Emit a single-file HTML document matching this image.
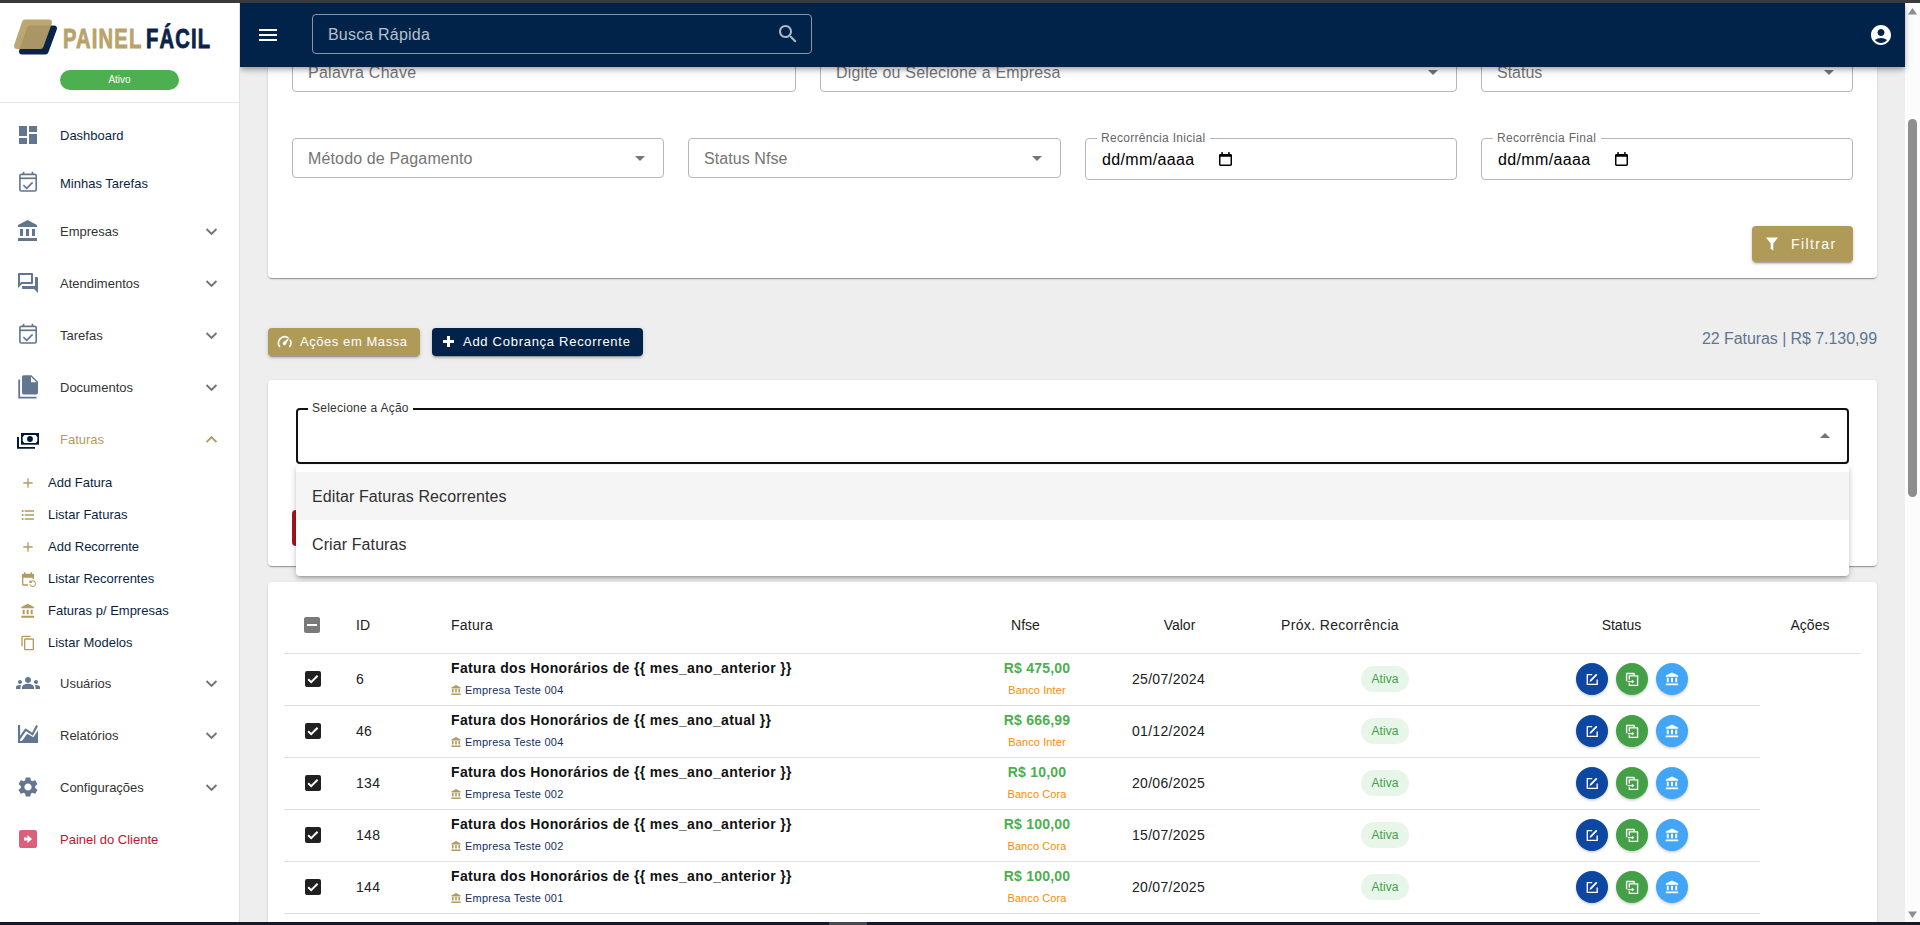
<!DOCTYPE html>
<html><head><meta charset="utf-8">
<style>
*{box-sizing:border-box;margin:0;padding:0}
html,body{width:1920px;height:925px;overflow:hidden;background:#eeeeee;font-family:"Liberation Sans",sans-serif;color:#212121}
.a{position:absolute}
#topstrip{left:0;top:0;width:1920px;height:3px;background:#3a3a3a;z-index:20}
#botstrip{left:0;top:922px;width:1920px;height:3px;background:#131a2d;z-index:20}
#sidebar{left:0;top:3px;width:240px;height:919px;background:#fff;border-right:1px solid #e0e0e0}
#topbar{left:240px;top:3px;width:1665px;height:64px;background:#012349;box-shadow:0 2px 4px -1px rgba(0,0,0,.2),0 4px 5px 0 rgba(0,0,0,.14),0 1px 10px 0 rgba(0,0,0,.12);z-index:10;clip-path:inset(0 -30px -30px 0)}
#scroll{left:1905px;top:3px;width:15px;height:919px;background:#fcfcfc}
.card{background:#fff;border-radius:4px;box-shadow:0 2px 1px -1px rgba(0,0,0,.2),0 1px 1px 0 rgba(0,0,0,.14),0 1px 3px 0 rgba(0,0,0,.12)}
.nav{left:0;width:239px;height:20px;line-height:20px;font-size:13px}
.nav .t{position:absolute;left:60px;top:0}
.nav svg{position:absolute}
.sub .t{left:48px}
.chev{position:absolute;left:203.5px;top:1.8px}
.inp{border:1px solid #b7b7b7;border-radius:4px;background:#fff}
.ph{position:absolute;font-size:16px;color:#757575;line-height:20px;white-space:nowrap}
.lbl{position:absolute;font-size:12px;color:#666;background:#fff;padding:0 4px;line-height:14px;white-space:nowrap}
.btn{border-radius:4px;color:#fff;box-shadow:0 3px 1px -2px rgba(0,0,0,.2),0 2px 2px 0 rgba(0,0,0,.14),0 1px 5px 0 rgba(0,0,0,.12)}
.th{position:absolute;font-size:14px;color:#212121;line-height:20px;white-space:nowrap}
.td{position:absolute;white-space:nowrap;line-height:16px}
</style></head><body>
<div id="topstrip" class="a"></div>

<!-- SIDEBAR -->
<div id="sidebar" class="a"></div>
<svg class="a" style="left:0;top:0" width="70" height="70" viewBox="0 0 70 70">
<polygon points="30,28.5 54,28.5 45.5,51.5 22,51.5" fill="#0b2349" stroke="#0b2349" stroke-width="6" stroke-linejoin="round"/>
<polygon points="25,22.5 49,22.5 40.5,46 17,46" fill="#b7a067" stroke="#b7a067" stroke-width="6" stroke-linejoin="round" opacity="0.92"/>
</svg>
<div class="a" style="left:63px;top:23px;height:32px;line-height:32px;font-size:28px;font-weight:bold;white-space:nowrap;transform:scaleX(0.72);transform-origin:0 0;color:#b9a36a;-webkit-text-stroke:0.9px #b9a36a;letter-spacing:1.6px">PAINEL</div>
<div class="a" style="left:146px;top:23px;height:32px;line-height:32px;font-size:28px;font-weight:bold;white-space:nowrap;transform:scaleX(0.72);transform-origin:0 0;color:#0b2349;-webkit-text-stroke:0.9px #0b2349;letter-spacing:1.6px">FÁCIL</div>
<div class="a" style="left:60px;top:70px;width:119px;height:20px;border-radius:10px;background:#4caf50;color:#fff;font-size:10px;line-height:20px;text-align:center">Ativo</div>
<div class="a" style="left:0;top:102px;width:239px;height:1px;background:#e6e6e6"></div>
<div class="a nav" style="top:126px;color:#0b1f3f"><svg style="left:16px;top:-3px" width="24" height="24" viewBox="0 0 24 24" fill="#62778f"><path d="M3 13h8V3H3v10zm0 8h8v-6H3v6zm10 0h8V11h-8v10zm0-18v6h8V3h-8z"/></svg><span class="t">Dashboard</span></div>
<div class="a nav" style="top:174px;color:#0b1f3f"><svg style="left:16px;top:-3px" width="24" height="24" viewBox="16 -3 24 24"><rect x="19.9" y="0.4" width="16.3" height="16.6" rx="1.4" fill="none" stroke="#62778f" stroke-width="1.6"/><path d="M19.9 4.3H36.2" stroke="#62778f" stroke-width="1.7"/><path d="M22.7 -2.2h1.7v3h-1.7zM31.6 -2.2h1.7v3h-1.7z" fill="#62778f"/><path d="M23.4 11.2L26.7 14.3 32.6 8.4" fill="none" stroke="#62778f" stroke-width="1.6"/></svg><span class="t">Minhas Tarefas</span></div>
<div class="a nav" style="top:222px;color:#333"><svg style="left:16px;top:-3px" width="24" height="24" viewBox="0 0 24 24" fill="#62778f"><path d="M4 10v7h3v-7H4zm6 0v7h3v-7h-3zM2 22h19v-3H2v3zm14-12v7h3v-7h-3zm-4.5-9L2 6v2h19V6l-9.5-5z"/></svg><span class="t">Empresas</span><svg class="chev" width="15" height="15" viewBox="4 4 16 16"><path fill="#757575" d="M16.59 8.59L12 13.17 7.41 8.59 6 10l6 6 6-6z"/></svg></div>
<div class="a nav" style="top:274px;color:#333"><svg style="left:16px;top:-3px" width="24" height="24" viewBox="0 0 24 24" fill="#62778f"><path d="M15 4v7H5.17L4 12.17V4h11m1-2H3c-.55 0-1 .45-1 1v14l4-4h10c.55 0 1-.45 1-1V3c0-.55-.45-1-1-1zm5 4h-2v9H6v2c0 .55.45 1 1 1h11l4 4V7c0-.55-.45-1-1-1z"/></svg><span class="t">Atendimentos</span><svg class="chev" width="15" height="15" viewBox="4 4 16 16"><path fill="#757575" d="M16.59 8.59L12 13.17 7.41 8.59 6 10l6 6 6-6z"/></svg></div>
<div class="a nav" style="top:326px;color:#333"><svg style="left:16px;top:-3px" width="24" height="24" viewBox="16 -3 24 24"><rect x="19.9" y="0.4" width="16.3" height="16.6" rx="1.4" fill="none" stroke="#62778f" stroke-width="1.6"/><path d="M19.9 4.3H36.2" stroke="#62778f" stroke-width="1.7"/><path d="M22.7 -2.2h1.7v3h-1.7zM31.6 -2.2h1.7v3h-1.7z" fill="#62778f"/><path d="M23.4 11.2L26.7 14.3 32.6 8.4" fill="none" stroke="#62778f" stroke-width="1.6"/></svg><span class="t">Tarefas</span><svg class="chev" width="15" height="15" viewBox="4 4 16 16"><path fill="#757575" d="M16.59 8.59L12 13.17 7.41 8.59 6 10l6 6 6-6z"/></svg></div>
<div class="a nav" style="top:378px;color:#333"><svg style="left:16px;top:-3px" width="24" height="24" viewBox="16 375 24 24"><path fill="#62778f" fill-rule="evenodd" d="M22 377Q22 375.3 23.7 375.3H31.5L38 381.8V392.8Q38 394.5 36.3 394.5H23.7Q22 394.5 22 392.8ZM31 376.8V382.2H36.5Z"/><path fill="#62778f" d="M18.3 379.4H20.1V396.8H36.5V398.6H18.3Z"/></svg><span class="t">Documentos</span><svg class="chev" width="15" height="15" viewBox="4 4 16 16"><path fill="#757575" d="M16.59 8.59L12 13.17 7.41 8.59 6 10l6 6 6-6z"/></svg></div>
<div class="a nav" style="top:430px;color:#b39b5f"><svg style="left:16px;top:0px" width="24" height="24" viewBox="16 430 24 24"><path fill="#03183a" d="M21 433H39V444.7H21z"/><path fill="#fff" d="M24.2 435.1H35.8L37.3 437.3V440.9L35.8 443H24.2L22.7 440.9V437.3z"/><circle cx="30" cy="439" r="2.9" fill="#03183a"/><path fill="#03183a" d="M17 437H19V446.9H35V448.7H17z"/></svg><span class="t">Faturas</span><svg class="chev" width="15" height="15" viewBox="4 4 16 16"><path fill="#b39b5f" d="M12 8l-6 6 1.41 1.41L12 10.83l4.59 4.58L18 14z"/></svg></div>
<div class="a nav sub" style="top:473px;color:#0b1f3f"><svg style="left:20px;top:2px" width="16" height="16" viewBox="0 0 24 24" fill="#b39b5f"><path d="M19 13h-6v6h-2v-6H5v-2h6V5h2v6h6v2z"/></svg><span class="t">Add Fatura</span></div>
<div class="a nav sub" style="top:505px;color:#0b1f3f"><svg style="left:20px;top:2px" width="16" height="16" viewBox="0 0 24 24" fill="#b39b5f"><path d="M4 10.5c-.83 0-1.5.67-1.5 1.5s.67 1.5 1.5 1.5 1.5-.67 1.5-1.5-.67-1.5-1.5-1.5zm0-6c-.83 0-1.5.67-1.5 1.5S3.170 7.5 4 7.5 5.5 6.830 5.5 6 4.830 4.5 4 4.5zm0 12c-.83 0-1.5.68-1.5 1.5s.68 1.5 1.5 1.5 1.5-.68 1.5-1.5-.67-1.5-1.5-1.5zM7 19h14v-2H7v2zm0-6h14v-2H7v2zm0-8v2h14V5H7z"/></svg><span class="t">Listar Faturas</span></div>
<div class="a nav sub" style="top:537px;color:#0b1f3f"><svg style="left:20px;top:2px" width="16" height="16" viewBox="0 0 24 24" fill="#b39b5f"><path d="M19 13h-6v6h-2v-6H5v-2h6V5h2v6h6v2z"/></svg><span class="t">Add Recorrente</span></div>
<div class="a nav sub" style="top:569px;color:#0b1f3f"><svg style="left:20px;top:1.5px" width="16" height="16" viewBox="0 0 24 24" fill="#b39b5f"><path d="M21 12V6c0-1.1-.9-2-2-2h-1V2h-2v2H8V2H6v2H5c-1.1 0-2 .9-2 2v14c0 1.1.9 2 2 2h7v-2H5V10h14v2h2zm-5.36 8c.43 1.45 1.77 2.5 3.36 2.5 1.93 0 3.5-1.57 3.5-3.5s-1.57-3.5-3.5-3.5c-.95 0-1.820.38-2.45 1H18V18h-4v-4h1.5v1.43C16.4 14.55 17.64 14 19 14c2.76 0 5 2.24 5 5s-2.24 5-5 5c-2.42 0-4.44-1.72-4.9-4h1.54z"/></svg><span class="t">Listar Recorrentes</span></div>
<div class="a nav sub" style="top:601px;color:#0b1f3f"><svg style="left:20px;top:2px" width="16" height="16" viewBox="0 0 24 24" fill="#b39b5f"><path d="M4 10v7h3v-7H4zm6 0v7h3v-7h-3zM2 22h19v-3H2v3zm14-12v7h3v-7h-3zm-4.5-9L2 6v2h19V6l-9.5-5z"/></svg><span class="t">Faturas p/ Empresas</span></div>
<div class="a nav sub" style="top:633px;color:#0b1f3f"><svg style="left:20px;top:2px" width="16" height="16" viewBox="0 0 24 24" fill="#b39b5f"><path d="M16 1H4c-1.1 0-2 .9-2 2v14h2V3h12V1zm3 4H8c-1.1 0-2 .9-2 2v14c0 1.1.9 2 2 2h11c1.1 0 2-.9 2-2V7c0-1.1-.9-2-2-2zm0 16H8V7h11v14z"/></svg><span class="t">Listar Modelos</span></div>
<div class="a nav" style="top:674px;color:#333"><svg style="left:16px;top:-3px" width="24" height="24" viewBox="0 0 24 24" fill="#62778f"><path d="M12 12.75c1.63 0 3.07.39 4.24.9 1.08.48 1.76 1.56 1.76 2.73V18H6v-1.61c0-1.18.68-2.26 1.76-2.73 1.17-.52 2.61-.91 4.24-.91zM4 13c1.1 0 2-.9 2-2s-.9-2-2-2-2 .9-2 2 .9 2 2 2zm1.13 1.1c-.37-.06-.74-.1-1.13-.1-.99 0-1.930.21-2.78.58C.48 14.9 0 15.62 0 16.43V18h4.5v-1.61c0-.83.23-1.61.63-2.29zM20 13c1.1 0 2-.9 2-2s-.9-2-2-2-2 .9-2 2 .9 2 2 2zm4 3.43c0-.81-.48-1.53-1.22-1.85-.85-.37-1.79-.58-2.780-.58-.39 0-.76.04-1.13.1.4.68.63 1.46.63 2.29V18H24v-1.57zM12 6c1.66 0 3 1.34 3 3s-1.34 3-3 3-3-1.34-3-3 1.34-3 3-3z"/></svg><span class="t">Usuários</span><svg class="chev" width="15" height="15" viewBox="4 4 16 16"><path fill="#757575" d="M16.59 8.59L12 13.17 7.41 8.59 6 10l6 6 6-6z"/></svg></div>
<div class="a nav" style="top:726px;color:#333"><svg style="left:16px;top:-4px" width="24" height="24" viewBox="0 0 24 24" fill="#62778f"><path d="M2 3h2.1v16h17.9v2H2z"/><path d="M3.2 16.8L9.7 7.6 16.5 12.2 21.1 3.6" fill="none" stroke="#62778f" stroke-width="2.1"/><path d="M5.2 20L11.2 11.8 17.4 15.3 22 8.2V20z"/></svg><span class="t">Relatórios</span><svg class="chev" width="15" height="15" viewBox="4 4 16 16"><path fill="#757575" d="M16.59 8.59L12 13.17 7.41 8.59 6 10l6 6 6-6z"/></svg></div>
<div class="a nav" style="top:778px;color:#333"><svg style="left:16px;top:-3px" width="24" height="24" viewBox="0 0 24 24" fill="#62778f"><path d="M19.14 12.94c.04-.3.06-.61.06-.94 0-.32-.02-.64-.07-.94l2.03-1.58c.18-.14.23-.41.12-.61l-1.92-3.32c-.12-.22-.37-.29-.59-.22l-2.39.96c-.5-.38-1.03-.7-1.62-.94l-.36-2.54c-.04-.24-.24-.41-.48-.41h-3.84c-.24 0-.43.17-.47.41l-.36 2.54c-.59.24-1.13.57-1.62.94l-2.39-.96c-.22-.08-.47 0-.59.22L2.74 8.87c-.12.21-.08.47.12.61l2.03 1.58c-.05.3-.09.63-.09.94s.02.64.07.94l-2.03 1.58c-.18.14-.23.41-.12.61l1.92 3.32c.12.22.37.29.59.22l2.39-.96c.5.38 1.03.7 1.62.94l.36 2.54c.05.24.24.41.48.41h3.84c.24 0 .44-.17.47-.41l.36-2.54c.59-.24 1.13-.56 1.62-.94l2.39.96c.22.08.47 0 .59-.22l1.92-3.32c.12-.22.07-.47-.12-.61l-2.01-1.58zM12 15.6c-1.98 0-3.6-1.62-3.6-3.6s1.62-3.6 3.6-3.6 3.6 1.62 3.6 3.6-1.62 3.6-3.6 3.6z"/></svg><span class="t">Configurações</span><svg class="chev" width="15" height="15" viewBox="4 4 16 16"><path fill="#757575" d="M16.59 8.59L12 13.17 7.41 8.59 6 10l6 6 6-6z"/></svg></div>
<div class="a nav" style="top:830px;color:#c8102e"><div class="a" style="left:19px;top:0px;width:18px;height:18px;border-radius:2px;background:#d9627a"></div><svg class="a" style="left:22px;top:3px" width="12" height="12" viewBox="0 0 12 12"><path fill="#fff" d="M2 4.5h3.5V2L10 6 5.5 10V7.5H2z"/></svg><span class="t">Painel do Cliente</span></div>

<!-- TOPBAR -->
<div id="topbar" class="a">
<svg class="a" style="left:16px;top:20px" width="24" height="24" viewBox="0 0 24 24" fill="#fff"><path d="M3 18h18v-2H3v2zm0-5h18v-2H3v2zm0-7v2h18V6H3z"/></svg>
<div class="a" style="left:72px;top:11px;width:500px;height:40px;border:1px solid #8796ab;border-radius:4px"></div>
<div class="a" style="left:88px;top:22px;font-size:16px;line-height:20px;color:#b7c0cc;letter-spacing:0.2px;white-space:nowrap">Busca Rápida</div>
<svg class="a" style="left:536px;top:19px" width="24" height="24" viewBox="0 0 24 24" fill="#adb9c9"><path d="M15.5 14h-.79l-.28-.27C15.41 12.59 16 11.11 16 9.5 16 5.91 13.09 3 9.5 3S3 5.91 3 9.5 5.91 16 9.5 16c1.61 0 3.09-.59 4.23-1.57l.27.28v.79l5 4.99L20.49 19l-4.99-5zm-6 0C7.01 14 5 11.99 5 9.5S7.01 5 9.5 5 14 7.01 14 9.5 11.99 14 9.5 14z"/></svg>
<svg class="a" style="left:1629px;top:20px" width="24" height="24" viewBox="0 0 24 24" fill="#fff"><path d="M12 2C6.48 2 2 6.48 2 12s4.48 10 10 10 10-4.48 10-10S17.52 2 12 2zm0 4c1.93 0 3.5 1.57 3.5 3.5S13.93 13 12 13s-3.5-1.57-3.5-3.5S10.07 6 12 6zm0 14c-2.03 0-4.43-.82-6.14-2.88C7.55 15.8 9.68 15 12 15s4.45.8 6.14 2.12C16.43 19.18 14.03 20 12 20z"/></svg>
</div>

<!-- MAIN -->

<!-- filter card -->
<div class="a card" style="left:268px;top:-20px;width:1609px;height:298px"></div>
<div class="a inp" style="left:292px;top:52px;width:504px;height:40px"></div>
<div class="ph" style="left:308px;top:63px;letter-spacing:0.27px">Palavra Chave</div>
<div class="a inp" style="left:820px;top:52px;width:637px;height:40px"></div>
<div class="ph" style="left:836px;top:63px;letter-spacing:0.17px">Digite ou Selecione a Empresa</div>
<svg class="a" style="left:1428px;top:70px" width="10" height="5" viewBox="0 0 10 5"><path d="M0 0h10L5 5z" fill="#757575"/></svg>
<div class="a inp" style="left:1481px;top:52px;width:372px;height:40px"></div>
<div class="ph" style="left:1497px;top:63px;letter-spacing:0px">Status</div>
<svg class="a" style="left:1824px;top:70px" width="10" height="5" viewBox="0 0 10 5"><path d="M0 0h10L5 5z" fill="#757575"/></svg>

<div class="a inp" style="left:292px;top:138px;width:372px;height:40px"></div>
<div class="ph" style="left:308px;top:149px;letter-spacing:0.14px">Método de Pagamento</div>
<svg class="a" style="left:635px;top:156px" width="10" height="5" viewBox="0 0 10 5"><path d="M0 0h10L5 5z" fill="#757575"/></svg>
<div class="a inp" style="left:688px;top:138px;width:373px;height:40px"></div>
<div class="ph" style="left:704px;top:149px;letter-spacing:0.08px">Status Nfse</div>
<svg class="a" style="left:1032px;top:156px" width="10" height="5" viewBox="0 0 10 5"><path d="M0 0h10L5 5z" fill="#757575"/></svg>

<div class="a inp" style="left:1085px;top:138px;width:372px;height:42px"></div>
<div class="lbl" style="left:1097px;top:131px;letter-spacing:0.3px;padding-right:5px">Recorrência Inicial</div>
<div class="ph" style="left:1102px;top:150px;color:#000;letter-spacing:0.35px">dd/mm/aaaa</div>
<svg class="a" style="left:1219px;top:152px" width="13" height="14" viewBox="0 0 14 15"><path fill="#000" d="M1.5 2h11a1.5 1.5 0 0 1 1.5 1.5v10a1.5 1.5 0 0 1-1.5 1.5h-11A1.5 1.5 0 0 1 0 13.5v-10A1.5 1.5 0 0 1 1.5 2zM1.6 5.2v8.2h10.8V5.2z"/><rect x="2.5" y="0" width="1.6" height="3" fill="#000"/><rect x="9.9" y="0" width="1.6" height="3" fill="#000"/></svg>
<div class="a inp" style="left:1481px;top:138px;width:372px;height:42px"></div>
<div class="lbl" style="left:1493px;top:131px;letter-spacing:0.3px;padding-right:5px">Recorrência Final</div>
<div class="ph" style="left:1498px;top:150px;color:#000;letter-spacing:0.35px">dd/mm/aaaa</div>
<svg class="a" style="left:1615px;top:152px" width="13" height="14" viewBox="0 0 14 15"><path fill="#000" d="M1.5 2h11a1.5 1.5 0 0 1 1.5 1.5v10a1.5 1.5 0 0 1-1.5 1.5h-11A1.5 1.5 0 0 1 0 13.5v-10A1.5 1.5 0 0 1 1.5 2zM1.6 5.2v8.2h10.8V5.2z"/><rect x="2.5" y="0" width="1.6" height="3" fill="#000"/><rect x="9.9" y="0" width="1.6" height="3" fill="#000"/></svg>

<div class="a btn" style="left:1752px;top:226px;width:101px;height:36px;background:#b09a58"></div>
<svg class="a" style="left:1764px;top:236px" width="16" height="16" viewBox="0 0 16 16"><path fill="#fff" d="M2 1.5h12L9.3 7.6V14.5L6.7 13V7.6z"/></svg>
<div class="a" style="left:1791px;top:235px;font-size:14px;line-height:18px;color:#fff;letter-spacing:1.4px">Filtrar</div>

<!-- mass action buttons -->
<div class="a btn" style="left:268px;top:328px;width:152px;height:28px;background:#b09a58"></div>
<svg class="a" style="left:276px;top:334px" width="18" height="16" viewBox="276 334 18 16"><path d="M279.6 346.5A6.2 6.2 0 0 1 287.6 337.5M290.2 340.1A6.2 6.2 0 0 1 289.8 346.5" fill="none" stroke="#fff" stroke-width="1.6" stroke-linecap="round"/><path d="M283 342.6L289.6 337.2 285.8 344.5A1.6 1.6 0 0 1 283 342.6Z" fill="#fff"/></svg>
<div class="a" style="left:300px;top:333px;font-size:13px;line-height:18px;color:#fff;letter-spacing:0.56px;white-space:nowrap">Ações em Massa</div>
<div class="a btn" style="left:432px;top:328px;width:211px;height:28px;background:#012349"></div>
<svg class="a" style="left:443px;top:336px" width="11" height="11" viewBox="0 0 11 11"><path fill="#fff" d="M4 0h3v4h4v3H7v4H4V7H0V4h4z"/></svg>
<div class="a" style="left:463px;top:333px;font-size:13px;line-height:18px;color:#fff;letter-spacing:0.72px;white-space:nowrap">Add Cobrança Recorrente</div>
<div class="a" style="left:1600px;top:329px;width:277px;text-align:right;font-size:16px;line-height:20px;color:#5f7590;white-space:nowrap;letter-spacing:-0.07px">22 Faturas | R$ 7.130,99</div>

<!-- action card -->
<div class="a card" style="left:268px;top:380px;width:1609px;height:186px"></div>
<div class="a" style="left:292px;top:510px;width:60px;height:36px;background:#a8141e;border-radius:4px"></div>
<div class="a" style="left:296px;top:408px;width:1553px;height:56px;border:2px solid #111;border-radius:4px"></div>
<div class="lbl" style="left:308px;top:401px;color:#333;letter-spacing:0.25px">Selecione a Ação</div>
<svg class="a" style="left:1820px;top:433px" width="10" height="5" viewBox="0 0 10 5"><path d="M0 5h10L5 0z" fill="#757575"/></svg>

<!-- dropdown -->
<div class="a" style="left:296px;top:465px;width:1553px;height:111px;background:#fff;border-radius:4px;box-shadow:0 3px 3px -2px rgba(0,0,0,.2),0 3px 4px 0 rgba(0,0,0,.14),0 1px 8px 0 rgba(0,0,0,.12);z-index:5">
 <div class="a" style="left:0;top:7px;width:1553px;height:48px;background:#f5f5f5"></div>
 <div class="a" style="left:16px;top:22px;font-size:16px;line-height:20px;color:#303030;letter-spacing:0.1px;white-space:nowrap">Editar Faturas Recorrentes</div>
 <div class="a" style="left:16px;top:70px;font-size:16px;line-height:20px;color:#303030;letter-spacing:0.1px;white-space:nowrap">Criar Faturas</div>
</div>

<!-- table card -->
<div class="a card" style="left:268px;top:582px;width:1609px;height:400px"></div>
<div class="a" style="left:304px;top:617px;width:16px;height:16px;background:#7a7a7a;border-radius:2px"></div><div class="a" style="left:307px;top:624px;width:10px;height:2px;background:#fff"></div>
<div class="th" style="left:356px;top:615px;letter-spacing:0px">ID</div>
<div class="th" style="left:451px;top:615px;letter-spacing:0.25px">Fatura</div>
<div class="th" style="left:925.5px;width:200px;text-align:center;top:615px;letter-spacing:0px">Nfse</div>
<div class="th" style="left:1079.5px;width:200px;text-align:center;top:615px;letter-spacing:0px">Valor</div>
<div class="th" style="left:1240px;width:200px;text-align:center;top:615px;letter-spacing:0.35px">Próx. Recorrência</div>
<div class="th" style="left:1521.5px;width:200px;text-align:center;top:615px;letter-spacing:0px">Status</div>
<div class="th" style="left:1710px;width:200px;text-align:center;top:615px;letter-spacing:0px">Ações</div>
<div class="a" style="left:284px;top:653px;width:1577px;height:1px;background:#e0e0e0"></div>
<div class="a" style="left:305px;top:671px;width:16px;height:16px;background:#212121;border-radius:2px"></div><svg class="a" style="left:305px;top:671px" width="16" height="16" viewBox="0 0 16 16"><path d="M3.2 8.2l3 3 6.4-6.4" fill="none" stroke="#fff" stroke-width="2"/></svg>
<div class="td" style="left:356px;top:671px;font-size:14px;color:#212121;letter-spacing:0.3px">6</div>
<div class="td" style="left:451px;top:660px;font-size:14px;font-weight:bold;color:#111;letter-spacing:0.35px">Fatura dos Honorários de {{ mes_ano_anterior }}</div>
<svg class="a" style="left:451px;top:685px" width="10" height="10" viewBox="0 0 10 10"><path fill="#b39b5f" d="M5 0L0.3 2.4V3.4h9.4V2.4z M1 4h1.6v3.6H1z M4.2 4h1.6v3.6H4.2z M7.4 4h1.6v3.6H7.4z M0.3 8.4h9.4V10H0.3z"/></svg>
<div class="td" style="left:465px;top:682px;font-size:11px;color:#12305a;letter-spacing:0.23px">Empresa Teste 004</div>
<div class="td" style="left:937px;width:200px;text-align:center;top:660px;font-size:14px;font-weight:bold;color:#4caf50;letter-spacing:0.2px">R$ 475,00</div>
<div class="td" style="left:937px;width:200px;text-align:center;top:682px;font-size:11px;color:#fb8c00;letter-spacing:0.1px">Banco Inter</div>
<div class="td" style="left:1068.5px;width:200px;text-align:center;top:671px;font-size:14px;color:#212121;letter-spacing:0.3px">25/07/2024</div>
<div class="a" style="left:1361px;top:666px;width:48px;height:26px;border-radius:13px;background:#e8f5e9;color:#43a047;font-size:12px;line-height:26px;text-align:center;letter-spacing:0.1px">Ativa</div>
<div class="a" style="left:1576px;top:663px;width:32px;height:32px;border-radius:16px;background:#0d47a1;box-shadow:0 2px 4px -1px rgba(0,0,0,.18),0 1px 2px 0 rgba(0,0,0,.1)"></div>
<div class="a" style="left:1616px;top:663px;width:32px;height:32px;border-radius:16px;background:#43a047;box-shadow:0 2px 4px -1px rgba(0,0,0,.18),0 1px 2px 0 rgba(0,0,0,.1)"></div>
<div class="a" style="left:1656px;top:663px;width:32px;height:32px;border-radius:16px;background:#42a5f5;box-shadow:0 2px 4px -1px rgba(0,0,0,.18),0 1px 2px 0 rgba(0,0,0,.1)"></div>
<svg class="a" style="left:1585px;top:672px" width="14" height="14" viewBox="0 0 14 14"><path d="M7.2 2.6H2.3V12.4H12.2V7.6" fill="none" stroke="#fff" stroke-width="1.35" stroke-linejoin="round"/><path d="M4.6 9.8L5 7.9 10.6 2.3a0.9 0.9 0 0 1 1.3 1.3L6.3 9.2z" fill="#fff"/></svg>
<svg class="a" style="left:1625px;top:672px" width="14" height="14" viewBox="0 0 14 14"><path d="M1.6 9.2V1.5H9.1V3.4" fill="none" stroke="#fff" stroke-width="1.35" stroke-linejoin="round"/><path d="M4.3 11.2V13.4H12.6V3.8H4.3V7.6" fill="none" stroke="#fff" stroke-width="1.35" stroke-linejoin="round"/><path d="M2.8 9.6H7.6" stroke="#fff" stroke-width="1.35"/><path d="M7.2 7.7L9.3 9.6 7.2 11.5z" fill="#fff"/></svg>
<svg class="a" style="left:1665px;top:672px" width="14" height="14" viewBox="0 0 14 14"><path fill="#fff" d="M7 0.5L0.8 3.6V4.8h12.4V3.6z M1.8 5.8h1.9v4.5H1.8z M6.05 5.8h1.9v4.5H6.05z M10.3 5.8h1.9v4.5H10.3z M0.8 11.4h12.4v1.8H0.8z"/></svg>
<div class="a" style="left:284px;top:705px;width:1476px;height:1px;background:#e0e0e0"></div>
<div class="a" style="left:305px;top:723px;width:16px;height:16px;background:#212121;border-radius:2px"></div><svg class="a" style="left:305px;top:723px" width="16" height="16" viewBox="0 0 16 16"><path d="M3.2 8.2l3 3 6.4-6.4" fill="none" stroke="#fff" stroke-width="2"/></svg>
<div class="td" style="left:356px;top:723px;font-size:14px;color:#212121;letter-spacing:0.3px">46</div>
<div class="td" style="left:451px;top:712px;font-size:14px;font-weight:bold;color:#111;letter-spacing:0.35px">Fatura dos Honorários de {{ mes_ano_atual }}</div>
<svg class="a" style="left:451px;top:737px" width="10" height="10" viewBox="0 0 10 10"><path fill="#b39b5f" d="M5 0L0.3 2.4V3.4h9.4V2.4z M1 4h1.6v3.6H1z M4.2 4h1.6v3.6H4.2z M7.4 4h1.6v3.6H7.4z M0.3 8.4h9.4V10H0.3z"/></svg>
<div class="td" style="left:465px;top:734px;font-size:11px;color:#12305a;letter-spacing:0.23px">Empresa Teste 004</div>
<div class="td" style="left:937px;width:200px;text-align:center;top:712px;font-size:14px;font-weight:bold;color:#4caf50;letter-spacing:0.2px">R$ 666,99</div>
<div class="td" style="left:937px;width:200px;text-align:center;top:734px;font-size:11px;color:#fb8c00;letter-spacing:0.1px">Banco Inter</div>
<div class="td" style="left:1068.5px;width:200px;text-align:center;top:723px;font-size:14px;color:#212121;letter-spacing:0.3px">01/12/2024</div>
<div class="a" style="left:1361px;top:718px;width:48px;height:26px;border-radius:13px;background:#e8f5e9;color:#43a047;font-size:12px;line-height:26px;text-align:center;letter-spacing:0.1px">Ativa</div>
<div class="a" style="left:1576px;top:715px;width:32px;height:32px;border-radius:16px;background:#0d47a1;box-shadow:0 2px 4px -1px rgba(0,0,0,.18),0 1px 2px 0 rgba(0,0,0,.1)"></div>
<div class="a" style="left:1616px;top:715px;width:32px;height:32px;border-radius:16px;background:#43a047;box-shadow:0 2px 4px -1px rgba(0,0,0,.18),0 1px 2px 0 rgba(0,0,0,.1)"></div>
<div class="a" style="left:1656px;top:715px;width:32px;height:32px;border-radius:16px;background:#42a5f5;box-shadow:0 2px 4px -1px rgba(0,0,0,.18),0 1px 2px 0 rgba(0,0,0,.1)"></div>
<svg class="a" style="left:1585px;top:724px" width="14" height="14" viewBox="0 0 14 14"><path d="M7.2 2.6H2.3V12.4H12.2V7.6" fill="none" stroke="#fff" stroke-width="1.35" stroke-linejoin="round"/><path d="M4.6 9.8L5 7.9 10.6 2.3a0.9 0.9 0 0 1 1.3 1.3L6.3 9.2z" fill="#fff"/></svg>
<svg class="a" style="left:1625px;top:724px" width="14" height="14" viewBox="0 0 14 14"><path d="M1.6 9.2V1.5H9.1V3.4" fill="none" stroke="#fff" stroke-width="1.35" stroke-linejoin="round"/><path d="M4.3 11.2V13.4H12.6V3.8H4.3V7.6" fill="none" stroke="#fff" stroke-width="1.35" stroke-linejoin="round"/><path d="M2.8 9.6H7.6" stroke="#fff" stroke-width="1.35"/><path d="M7.2 7.7L9.3 9.6 7.2 11.5z" fill="#fff"/></svg>
<svg class="a" style="left:1665px;top:724px" width="14" height="14" viewBox="0 0 14 14"><path fill="#fff" d="M7 0.5L0.8 3.6V4.8h12.4V3.6z M1.8 5.8h1.9v4.5H1.8z M6.05 5.8h1.9v4.5H6.05z M10.3 5.8h1.9v4.5H10.3z M0.8 11.4h12.4v1.8H0.8z"/></svg>
<div class="a" style="left:284px;top:757px;width:1476px;height:1px;background:#e0e0e0"></div>
<div class="a" style="left:305px;top:775px;width:16px;height:16px;background:#212121;border-radius:2px"></div><svg class="a" style="left:305px;top:775px" width="16" height="16" viewBox="0 0 16 16"><path d="M3.2 8.2l3 3 6.4-6.4" fill="none" stroke="#fff" stroke-width="2"/></svg>
<div class="td" style="left:356px;top:775px;font-size:14px;color:#212121;letter-spacing:0.3px">134</div>
<div class="td" style="left:451px;top:764px;font-size:14px;font-weight:bold;color:#111;letter-spacing:0.35px">Fatura dos Honorários de {{ mes_ano_anterior }}</div>
<svg class="a" style="left:451px;top:789px" width="10" height="10" viewBox="0 0 10 10"><path fill="#b39b5f" d="M5 0L0.3 2.4V3.4h9.4V2.4z M1 4h1.6v3.6H1z M4.2 4h1.6v3.6H4.2z M7.4 4h1.6v3.6H7.4z M0.3 8.4h9.4V10H0.3z"/></svg>
<div class="td" style="left:465px;top:786px;font-size:11px;color:#12305a;letter-spacing:0.23px">Empresa Teste 002</div>
<div class="td" style="left:937px;width:200px;text-align:center;top:764px;font-size:14px;font-weight:bold;color:#4caf50;letter-spacing:0.2px">R$ 10,00</div>
<div class="td" style="left:937px;width:200px;text-align:center;top:786px;font-size:11px;color:#fb8c00;letter-spacing:0.1px">Banco Cora</div>
<div class="td" style="left:1068.5px;width:200px;text-align:center;top:775px;font-size:14px;color:#212121;letter-spacing:0.3px">20/06/2025</div>
<div class="a" style="left:1361px;top:770px;width:48px;height:26px;border-radius:13px;background:#e8f5e9;color:#43a047;font-size:12px;line-height:26px;text-align:center;letter-spacing:0.1px">Ativa</div>
<div class="a" style="left:1576px;top:767px;width:32px;height:32px;border-radius:16px;background:#0d47a1;box-shadow:0 2px 4px -1px rgba(0,0,0,.18),0 1px 2px 0 rgba(0,0,0,.1)"></div>
<div class="a" style="left:1616px;top:767px;width:32px;height:32px;border-radius:16px;background:#43a047;box-shadow:0 2px 4px -1px rgba(0,0,0,.18),0 1px 2px 0 rgba(0,0,0,.1)"></div>
<div class="a" style="left:1656px;top:767px;width:32px;height:32px;border-radius:16px;background:#42a5f5;box-shadow:0 2px 4px -1px rgba(0,0,0,.18),0 1px 2px 0 rgba(0,0,0,.1)"></div>
<svg class="a" style="left:1585px;top:776px" width="14" height="14" viewBox="0 0 14 14"><path d="M7.2 2.6H2.3V12.4H12.2V7.6" fill="none" stroke="#fff" stroke-width="1.35" stroke-linejoin="round"/><path d="M4.6 9.8L5 7.9 10.6 2.3a0.9 0.9 0 0 1 1.3 1.3L6.3 9.2z" fill="#fff"/></svg>
<svg class="a" style="left:1625px;top:776px" width="14" height="14" viewBox="0 0 14 14"><path d="M1.6 9.2V1.5H9.1V3.4" fill="none" stroke="#fff" stroke-width="1.35" stroke-linejoin="round"/><path d="M4.3 11.2V13.4H12.6V3.8H4.3V7.6" fill="none" stroke="#fff" stroke-width="1.35" stroke-linejoin="round"/><path d="M2.8 9.6H7.6" stroke="#fff" stroke-width="1.35"/><path d="M7.2 7.7L9.3 9.6 7.2 11.5z" fill="#fff"/></svg>
<svg class="a" style="left:1665px;top:776px" width="14" height="14" viewBox="0 0 14 14"><path fill="#fff" d="M7 0.5L0.8 3.6V4.8h12.4V3.6z M1.8 5.8h1.9v4.5H1.8z M6.05 5.8h1.9v4.5H6.05z M10.3 5.8h1.9v4.5H10.3z M0.8 11.4h12.4v1.8H0.8z"/></svg>
<div class="a" style="left:284px;top:809px;width:1476px;height:1px;background:#e0e0e0"></div>
<div class="a" style="left:305px;top:827px;width:16px;height:16px;background:#212121;border-radius:2px"></div><svg class="a" style="left:305px;top:827px" width="16" height="16" viewBox="0 0 16 16"><path d="M3.2 8.2l3 3 6.4-6.4" fill="none" stroke="#fff" stroke-width="2"/></svg>
<div class="td" style="left:356px;top:827px;font-size:14px;color:#212121;letter-spacing:0.3px">148</div>
<div class="td" style="left:451px;top:816px;font-size:14px;font-weight:bold;color:#111;letter-spacing:0.35px">Fatura dos Honorários de {{ mes_ano_anterior }}</div>
<svg class="a" style="left:451px;top:841px" width="10" height="10" viewBox="0 0 10 10"><path fill="#b39b5f" d="M5 0L0.3 2.4V3.4h9.4V2.4z M1 4h1.6v3.6H1z M4.2 4h1.6v3.6H4.2z M7.4 4h1.6v3.6H7.4z M0.3 8.4h9.4V10H0.3z"/></svg>
<div class="td" style="left:465px;top:838px;font-size:11px;color:#12305a;letter-spacing:0.23px">Empresa Teste 002</div>
<div class="td" style="left:937px;width:200px;text-align:center;top:816px;font-size:14px;font-weight:bold;color:#4caf50;letter-spacing:0.2px">R$ 100,00</div>
<div class="td" style="left:937px;width:200px;text-align:center;top:838px;font-size:11px;color:#fb8c00;letter-spacing:0.1px">Banco Cora</div>
<div class="td" style="left:1068.5px;width:200px;text-align:center;top:827px;font-size:14px;color:#212121;letter-spacing:0.3px">15/07/2025</div>
<div class="a" style="left:1361px;top:822px;width:48px;height:26px;border-radius:13px;background:#e8f5e9;color:#43a047;font-size:12px;line-height:26px;text-align:center;letter-spacing:0.1px">Ativa</div>
<div class="a" style="left:1576px;top:819px;width:32px;height:32px;border-radius:16px;background:#0d47a1;box-shadow:0 2px 4px -1px rgba(0,0,0,.18),0 1px 2px 0 rgba(0,0,0,.1)"></div>
<div class="a" style="left:1616px;top:819px;width:32px;height:32px;border-radius:16px;background:#43a047;box-shadow:0 2px 4px -1px rgba(0,0,0,.18),0 1px 2px 0 rgba(0,0,0,.1)"></div>
<div class="a" style="left:1656px;top:819px;width:32px;height:32px;border-radius:16px;background:#42a5f5;box-shadow:0 2px 4px -1px rgba(0,0,0,.18),0 1px 2px 0 rgba(0,0,0,.1)"></div>
<svg class="a" style="left:1585px;top:828px" width="14" height="14" viewBox="0 0 14 14"><path d="M7.2 2.6H2.3V12.4H12.2V7.6" fill="none" stroke="#fff" stroke-width="1.35" stroke-linejoin="round"/><path d="M4.6 9.8L5 7.9 10.6 2.3a0.9 0.9 0 0 1 1.3 1.3L6.3 9.2z" fill="#fff"/></svg>
<svg class="a" style="left:1625px;top:828px" width="14" height="14" viewBox="0 0 14 14"><path d="M1.6 9.2V1.5H9.1V3.4" fill="none" stroke="#fff" stroke-width="1.35" stroke-linejoin="round"/><path d="M4.3 11.2V13.4H12.6V3.8H4.3V7.6" fill="none" stroke="#fff" stroke-width="1.35" stroke-linejoin="round"/><path d="M2.8 9.6H7.6" stroke="#fff" stroke-width="1.35"/><path d="M7.2 7.7L9.3 9.6 7.2 11.5z" fill="#fff"/></svg>
<svg class="a" style="left:1665px;top:828px" width="14" height="14" viewBox="0 0 14 14"><path fill="#fff" d="M7 0.5L0.8 3.6V4.8h12.4V3.6z M1.8 5.8h1.9v4.5H1.8z M6.05 5.8h1.9v4.5H6.05z M10.3 5.8h1.9v4.5H10.3z M0.8 11.4h12.4v1.8H0.8z"/></svg>
<div class="a" style="left:284px;top:861px;width:1476px;height:1px;background:#e0e0e0"></div>
<div class="a" style="left:305px;top:879px;width:16px;height:16px;background:#212121;border-radius:2px"></div><svg class="a" style="left:305px;top:879px" width="16" height="16" viewBox="0 0 16 16"><path d="M3.2 8.2l3 3 6.4-6.4" fill="none" stroke="#fff" stroke-width="2"/></svg>
<div class="td" style="left:356px;top:879px;font-size:14px;color:#212121;letter-spacing:0.3px">144</div>
<div class="td" style="left:451px;top:868px;font-size:14px;font-weight:bold;color:#111;letter-spacing:0.35px">Fatura dos Honorários de {{ mes_ano_anterior }}</div>
<svg class="a" style="left:451px;top:893px" width="10" height="10" viewBox="0 0 10 10"><path fill="#b39b5f" d="M5 0L0.3 2.4V3.4h9.4V2.4z M1 4h1.6v3.6H1z M4.2 4h1.6v3.6H4.2z M7.4 4h1.6v3.6H7.4z M0.3 8.4h9.4V10H0.3z"/></svg>
<div class="td" style="left:465px;top:890px;font-size:11px;color:#12305a;letter-spacing:0.23px">Empresa Teste 001</div>
<div class="td" style="left:937px;width:200px;text-align:center;top:868px;font-size:14px;font-weight:bold;color:#4caf50;letter-spacing:0.2px">R$ 100,00</div>
<div class="td" style="left:937px;width:200px;text-align:center;top:890px;font-size:11px;color:#fb8c00;letter-spacing:0.1px">Banco Cora</div>
<div class="td" style="left:1068.5px;width:200px;text-align:center;top:879px;font-size:14px;color:#212121;letter-spacing:0.3px">20/07/2025</div>
<div class="a" style="left:1361px;top:874px;width:48px;height:26px;border-radius:13px;background:#e8f5e9;color:#43a047;font-size:12px;line-height:26px;text-align:center;letter-spacing:0.1px">Ativa</div>
<div class="a" style="left:1576px;top:871px;width:32px;height:32px;border-radius:16px;background:#0d47a1;box-shadow:0 2px 4px -1px rgba(0,0,0,.18),0 1px 2px 0 rgba(0,0,0,.1)"></div>
<div class="a" style="left:1616px;top:871px;width:32px;height:32px;border-radius:16px;background:#43a047;box-shadow:0 2px 4px -1px rgba(0,0,0,.18),0 1px 2px 0 rgba(0,0,0,.1)"></div>
<div class="a" style="left:1656px;top:871px;width:32px;height:32px;border-radius:16px;background:#42a5f5;box-shadow:0 2px 4px -1px rgba(0,0,0,.18),0 1px 2px 0 rgba(0,0,0,.1)"></div>
<svg class="a" style="left:1585px;top:880px" width="14" height="14" viewBox="0 0 14 14"><path d="M7.2 2.6H2.3V12.4H12.2V7.6" fill="none" stroke="#fff" stroke-width="1.35" stroke-linejoin="round"/><path d="M4.6 9.8L5 7.9 10.6 2.3a0.9 0.9 0 0 1 1.3 1.3L6.3 9.2z" fill="#fff"/></svg>
<svg class="a" style="left:1625px;top:880px" width="14" height="14" viewBox="0 0 14 14"><path d="M1.6 9.2V1.5H9.1V3.4" fill="none" stroke="#fff" stroke-width="1.35" stroke-linejoin="round"/><path d="M4.3 11.2V13.4H12.6V3.8H4.3V7.6" fill="none" stroke="#fff" stroke-width="1.35" stroke-linejoin="round"/><path d="M2.8 9.6H7.6" stroke="#fff" stroke-width="1.35"/><path d="M7.2 7.7L9.3 9.6 7.2 11.5z" fill="#fff"/></svg>
<svg class="a" style="left:1665px;top:880px" width="14" height="14" viewBox="0 0 14 14"><path fill="#fff" d="M7 0.5L0.8 3.6V4.8h12.4V3.6z M1.8 5.8h1.9v4.5H1.8z M6.05 5.8h1.9v4.5H6.05z M10.3 5.8h1.9v4.5H10.3z M0.8 11.4h12.4v1.8H0.8z"/></svg>
<div class="a" style="left:284px;top:913px;width:1476px;height:1px;background:#e0e0e0"></div>


<div id="scroll" class="a"></div>
<div class="a" style="left:1908px;top:119px;width:9px;height:378px;border-radius:5px;background:#8e8e8e"></div>
<svg class="a" style="left:1908px;top:8px" width="9" height="7" viewBox="0 0 9 7"><path d="M0 6.5h9L4.5 0z" fill="#8e8e8e"/></svg>
<svg class="a" style="left:1908px;top:911px" width="9" height="7" viewBox="0 0 9 7"><path d="M0 0.5h9L4.5 7z" fill="#8e8e8e"/></svg>
<div id="botstrip" class="a"></div><div class="a" style="left:829px;top:922px;width:38px;height:3px;background:#464a56;z-index:21"></div>
</body></html>
